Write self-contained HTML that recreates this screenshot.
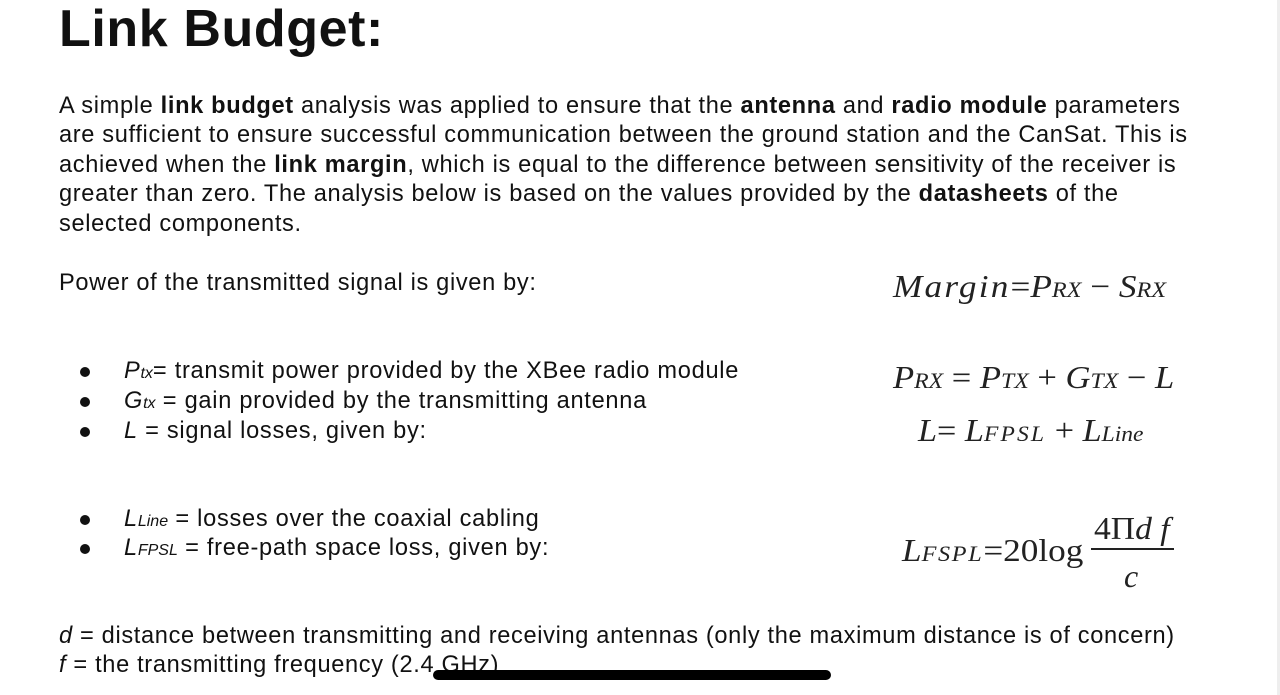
<!DOCTYPE html>
<html><head><meta charset="utf-8"><style>
body{margin:0;width:1280px;height:695px;background:#fff;position:relative;overflow:hidden;font-family:"Liberation Sans",Arial,sans-serif;color:#111}
.l{position:absolute;left:59px;font-size:23.6px;letter-spacing:0.66px;white-space:nowrap;line-height:26px}
.b{position:absolute;left:80px;width:10px;height:10px;border-radius:50%;background:#111}
.bl{position:absolute;left:124px;font-size:23.6px;letter-spacing:0.72px;white-space:nowrap;line-height:26px}
.e{position:absolute;font-family:"Liberation Serif",serif;font-style:italic;font-size:32px;white-space:nowrap;line-height:34px;color:#222;transform-origin:left center}
.s{font-size:22px}
.n{font-style:normal}
sub{font-size:16px;vertical-align:baseline;letter-spacing:0}
</style></head><body>
<div style="position:absolute;left:59px;top:-1px;font-size:52px;letter-spacing:0.6px;font-weight:bold;line-height:60px">Link Budget:</div>
<div class="l" style="top:93px">A simple <b>link budget</b> analysis was applied to ensure that the <b>antenna</b> and <b>radio module</b> parameters</div>
<div class="l" style="top:122px">are sufficient to ensure successful communication between the ground station and the CanSat. This is</div>
<div class="l" style="top:152px">achieved when the <b>link margin</b>, which is equal to the difference between sensitivity of the receiver is</div>
<div class="l" style="top:181px">greater than zero. The analysis below is based on the values provided by the <b>datasheets</b> of the</div>
<div class="l" style="top:211px">selected components.</div>
<div class="l" style="top:270px">Power of the transmitted signal is given by:</div>

<div class="b" style="top:367px"></div><div class="bl" style="top:358px"><i>P<sub>tx</sub></i>= transmit power provided by the XBee radio module</div>
<div class="b" style="top:397px"></div><div class="bl" style="top:388px"><i>G<sub>tx</sub></i> = gain provided by the transmitting antenna</div>
<div class="b" style="top:427px"></div><div class="bl" style="top:418px"><i>L</i> = signal losses, given by:</div>
<div class="b" style="top:515px"></div><div class="bl" style="top:506px"><i>L<sub>Line</sub></i> = losses over the coaxial cabling</div>
<div class="b" style="top:544px"></div><div class="bl" style="top:535px"><i>L<sub>FPSL</sub></i> = free-path space loss, given by:</div>
<div class="l" style="top:623px"><i>d</i> = distance between transmitting and receiving antennas (only the maximum distance is of concern)</div>
<div class="l" style="top:652px"><i>f</i> = the transmitting frequency (2.4 GHz)</div>
<div style="position:absolute;left:433px;top:670px;width:398px;height:10px;border-radius:5px;background:#000"></div>

<div class="e" style="left:893px;top:269px;transform:scaleX(1.1)"><span style="letter-spacing:2px">Margin</span><span class="n">=</span>P<span class="s">RX</span><span class="n"> − </span>S<span class="s">RX</span></div>
<div class="e" style="left:893px;top:360px;transform:scaleX(1.08)">P<span class="s">RX</span><span class="n"> = </span>P<span class="s">TX</span><span class="n"> + </span>G<span class="s">TX</span><span class="n"> − </span>L</div>
<div class="e" style="left:918px;top:413px;transform:scaleX(1.07)">L<span class="n">= </span>L<span class="s" style="letter-spacing:2px">FPSL</span><span class="n"> + </span>L<span class="s">Line</span></div>
<div class="e" style="left:902px;top:533px;transform:scaleX(1.1)">L<span class="s" style="letter-spacing:1.5px">FSPL</span><span class="n">=20log</span></div>
<div class="e" style="left:1094px;top:511px;transform:scaleX(1.05)"><span class="n">4Π</span>d f</div>
<div style="position:absolute;left:1091px;top:548px;width:83px;height:1.5px;background:#222"></div>
<div class="e" style="left:1124px;top:559px">c</div>
<div style="position:absolute;left:1277px;top:0;width:3px;height:695px;background:#eee"></div>
</body></html>
